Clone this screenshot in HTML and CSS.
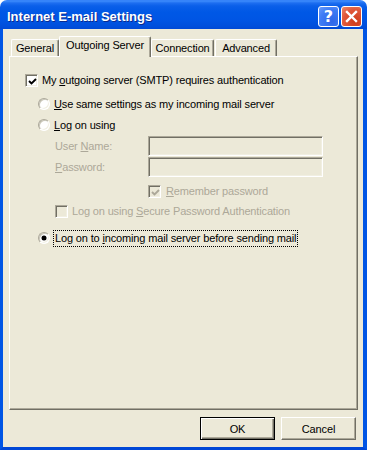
FILE: index.html
```html
<!DOCTYPE html>
<html lang="en">

<head>
  <meta charset="UTF-8">
  <title>Internet E-mail Settings</title>
  <link rel="stylesheet" href="styles.css">
</head>

<body>
  <div class="window">
    <div class="titlebar">
      <span class="titlebar__text">Internet E-mail Settings</span>
      <div class="titlebar__buttons">
        <span class="cap-btn cap-btn--help">?</span>
        <span class="cap-btn cap-btn--close">
          <svg width="13" height="13" viewBox="0 0 13 13">
            <path d="M2 2 L11 11 M11 2 L2 11" stroke="#fff" stroke-width="2.4" stroke-linecap="square"></path>
          </svg>
        </span>
      </div>
    </div>

    <div class="frame">
      <!-- TABS -->
      <div class="tabs">
        <span class="tab tab--general">General</span>
        <span class="tab tab--active">Outgoing Server</span>
        <span class="tab tab--connection">Connection</span>
        <span class="tab tab--advanced">Advanced</span>
      </div>

      <div class="panel">
        <div class="row">
          <span class="check check--on">
            <svg viewBox="0 0 9 9"><path d="M1 4 L3.5 6.5 L8 2" fill="none" stroke="currentColor" stroke-width="1.9"></path></svg>
          </span>
          <span class="row__label">My <u>o</u>utgoing server (SMTP) requires authentication</span>
        </div>

        <div class="row row--radio row--first-radio">
          <span class="radio"></span>
          <span class="row__label"><u>U</u>se same settings as my incoming mail server</span>
        </div>

        <div class="row row--radio row--tight">
          <span class="radio"></span>
          <span class="row__label"><u>L</u>og on using</span>
        </div>

        <div class="row row--field row--tight">
          <span class="field__label">User <u>N</u>ame:</span>
          <span class="textbox"></span>
        </div>

        <div class="row row--field row--tight">
          <span class="field__label"><u>P</u>assword:</span>
          <span class="textbox"></span>
        </div>

        <div class="row row--remember">
          <span class="check check--on check--disabled">
            <svg viewBox="0 0 9 9"><path d="M1 4 L3.5 6.5 L8 2" fill="none" stroke="currentColor" stroke-width="1.9"></path></svg>
          </span>
          <span class="row__label row__label--disabled"><u>R</u>emember password</span>
        </div>

        <div class="row row--spa">
          <span class="check check--disabled"></span>
          <span class="row__label row__label--disabled">Log on using <u>S</u>ecure Password Authentication</span>
        </div>

        <div class="row row--radio row--last-radio">
          <span class="radio radio--on"></span>
          <span class="row__label row__label--focus">Log on to <u>i</u>ncoming mail server before sending mail</span>
        </div>
      </div>

      <div class="buttons">
        <span class="btn btn--default">OK</span>
        <span class="btn">Cancel</span>
      </div>
    </div>
  </div>
</body>

</html>
```

FILE: styles.css
```css
:root {
  --face: #ece9d8;
  --shadow: #aca899;
  --darkShadow: #716f64;
  --light: #f1efe2;
  --disabledText: #aca899;
  --lunaBlue: #0055e5;
}

* {
  box-sizing: border-box;
}

body {
  margin: 0;
  background: #fff;
  font-family: "Liberation Sans", Arial, sans-serif;
  font-size: 11px;
  color: #000;
}

u {
  text-decoration: underline;
  text-underline-offset: 1px;
}

.window {
  width: 367px;
  height: 450px;
  display: flex;
  flex-direction: column;
}

/* TITLE BAR */
.titlebar {
  height: 29px;
  flex: none;
  display: flex;
  align-items: center;
  justify-content: space-between;
  padding: 0 5px 0 7px;
  border-radius: 7px 7px 0 0;
  background: linear-gradient(to bottom,
      #2f7cf6 0px, #3d8cfc 1px, #1d6ef0 3px, #0a5fe9 6px,
      #0058e6 12px, #0055e4 20px, #004fdc 26px, #0049d6 29px);
}

.titlebar__text {
  color: #fff;
  font-weight: 700;
  font-size: 13px;
  padding-top: 3px;
  text-shadow: 1px 1px #0b2a8e;
}

.titlebar__buttons {
  display: flex;
  gap: 2px;
  padding-top: 3px;
}

.cap-btn {
  width: 21px;
  height: 21px;
  border: 1px solid #fff;
  border-radius: 3px;
  display: flex;
  align-items: center;
  justify-content: center;
  color: #fff;
}

.cap-btn--help {
  background: radial-gradient(circle at 70% 75%, #2f66e8 0%, #3e7cf5 60%, #6a9cfb 100%);
  font-weight: 700;
  font-size: 16px;
  font-family: "DejaVu Sans", sans-serif;
}

.cap-btn--close {
  background: radial-gradient(circle at 70% 75%, #cf3c19 0%, #e0583a 60%, #ec8a6c 100%);
}

/* WINDOW FRAME */
.frame {
  flex: 1;
  display: flex;
  flex-direction: column;
  background: var(--face);
  border-left: 3px solid var(--lunaBlue);
  border-right: 4px solid var(--lunaBlue);
  border-bottom: 3px solid #0047d6;
  padding: 7px 5px 7px 6px;
  letter-spacing: -0.15px;
}

/* TABS */
.tabs {
  height: 20px;
  display: flex;
  align-items: flex-end;
  padding-left: 2px;
  position: relative;
  z-index: 1;
}

.tab {
  height: 17px;
  border-top: 1px solid #fff;
  border-left: 1px solid #fff;
  border-right: 1px solid var(--darkShadow);
  border-radius: 2px 2px 0 0;
  box-shadow: inset -1px 0 var(--shadow);
  background: var(--face);
  text-align: center;
  padding-top: 2px;
}

.tab--general {
  width: 48px;
}

.tab--active {
  width: 92px;
  height: 21px;
  margin-bottom: -1px;
  padding-top: 2px;
}

.tab--connection {
  width: 63px;
}

.tab--advanced {
  width: 62px;
  margin-left: 1px;
}

.panel {
  flex: 1;
  border-top: 1px solid #fff;
  border-left: 1px solid #fff;
  border-right: 1px solid var(--darkShadow);
  border-bottom: 1px solid var(--darkShadow);
  box-shadow: inset -1px -1px var(--shadow);
  padding: 13px 0 0 15px;
}

/* ROWS */
.row {
  height: 20px;
  display: flex;
  align-items: center;
}

.row__label {
  margin-left: 4px;
  white-space: nowrap;
}

.row__label--disabled {
  color: var(--disabledText);
}

.row__label--focus {
  outline: 1px dotted #000;
  padding: 1px 1px 2px 1px;
  margin-left: 4px;
}

.row--radio {
  padding-left: 13px;
}

.row--first-radio {
  margin-top: 4px;
}

.row--tight {
  margin-top: 1px;
}

.row--field {
  padding-left: 30px;
}

.field__label {
  width: 93px;
  color: var(--disabledText);
}

.row--remember {
  margin-top: 4px;
  padding-left: 123px;
}

.row--remember .row__label {
  margin-left: 5px;
}

.row--spa {
  padding-left: 30px;
}

.row--last-radio {
  margin-top: 7px;
}

/* CONTROLS */
.check {
  width: 13px;
  height: 13px;
  flex: none;
  background: #fff;
  border: 1px solid;
  border-color: var(--shadow) #fff #fff var(--shadow);
  box-shadow: inset 1px 1px var(--darkShadow), inset -1px -1px var(--light);
  padding: 2px;
  color: #000;
}

.check svg {
  display: block;
  width: 9px;
  height: 9px;
}

.check--disabled {
  background: var(--face);
  color: var(--shadow);
}

.radio {
  width: 12px;
  height: 12px;
  flex: none;
  border-radius: 50%;
  background: #fff;
  border: 1px solid;
  border-color: var(--shadow) #fff #fff var(--shadow);
  box-shadow: inset 1px 1px #c9c6b8, inset -1px -1px var(--light);
  display: flex;
  align-items: center;
  justify-content: center;
}

.radio--on::after {
  content: "";
  width: 4px;
  height: 4px;
  border-radius: 50%;
  background: #000;
  box-shadow: 0 0 0 0.5px #000;
}

.textbox {
  width: 175px;
  height: 20px;
  background: var(--face);
  border: 1px solid;
  border-color: var(--shadow) #fff #fff var(--shadow);
  box-shadow: inset 1px 1px var(--darkShadow), inset -1px -1px var(--light);
}

/* DIALOG BUTTONS */
.buttons {
  display: flex;
  justify-content: flex-end;
  gap: 6px;
  margin-top: 7px;
  padding-right: 2px;
}

.btn {
  width: 75px;
  height: 23px;
  display: flex;
  align-items: center;
  justify-content: center;
  background: var(--face);
  border: 1px solid;
  border-color: #fff var(--darkShadow) var(--darkShadow) #fff;
  box-shadow: inset -1px -1px var(--shadow);
}

.btn--default {
  border-color: #000;
  box-shadow: inset 1px 1px #fff, inset -1px -1px var(--darkShadow), inset -2px -2px var(--shadow);
}
```
